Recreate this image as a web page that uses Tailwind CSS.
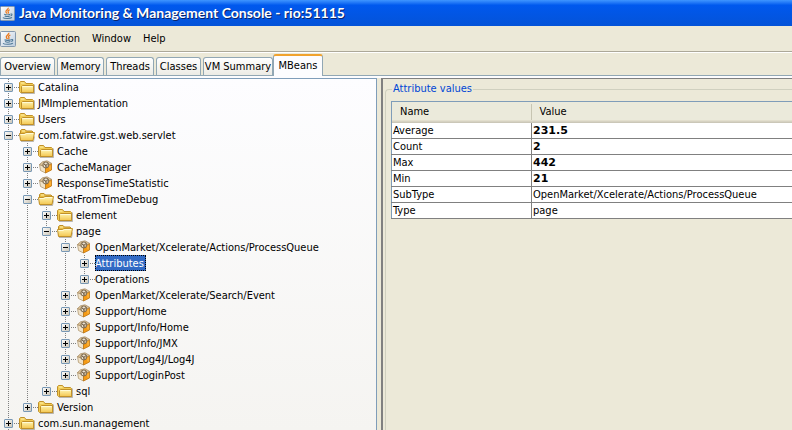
<!DOCTYPE html>
<html lang="en">
<head>
<meta charset="utf-8">
<meta name="viewport" content="width=device-width, initial-scale=1">
<title>Java Monitoring &amp; Management Console</title>
<script src="https://cdn.jsdelivr.net/npm/@tailwindcss/browser@4"></script>
</head>
<body class="flex h-screen flex-col overflow-hidden bg-[#ece9d8] font-['DejaVu_Sans_Condensed','DejaVu_Sans',sans-serif] text-[11px] leading-4 text-black">
<svg class="absolute size-0" aria-hidden="true">
  <defs>
    <linearGradient id="fold" x1="0" y1="0" x2="0" y2="1"><stop offset="0" stop-color="#fff6b4"/><stop offset="1" stop-color="#f3c650"/></linearGradient>
    <linearGradient id="box" x1="0" y1="0" x2="1" y2="1"><stop offset="0" stop-color="#fff"/><stop offset="1" stop-color="#c9c3b4"/></linearGradient>
    <linearGradient id="tile" x1="0" y1="0" x2="1" y2="1"><stop offset="0" stop-color="#fff"/><stop offset="1" stop-color="#b9cbdc"/></linearGradient>
  </defs>
  <symbol id="java" viewBox="0 0 16 16">
    <rect x=".5" y=".5" width="15" height="15" rx="1" fill="url(#tile)" stroke="#8499ad"/>
    <path d="M8.8 1.8c.7 1.8-3 2.600-2.500 4.400.2.800.9 1.200 1.100 1.900M10.400 4c-1.600.6-2.400 1.400-1.600 2.400.5.700.1 1.300-.5 1.700" fill="none" stroke="#ec7a1c" stroke-width="1.300"/>
    <path d="M4.500 8.800c1.500.7 5 .7 6.300 0M5 10.600c1.500.7 4 .7 5.400 0M3 12.300c1.500 1.300 8 1.300 9.800 0M11.200 8.600c2-.6 2.300 1.200 0 2" fill="none" stroke="#4d7896" stroke-width="1.100"/>
  </symbol>
  <symbol id="plus" viewBox="0 0 19 16">
    <path d="M14 8.500h1M16 8.500h1M18 8.500h1" stroke="#808080"/>
    <rect x="4.500" y="4.500" width="8" height="8" rx=".5" fill="url(#box)" stroke="#7898b5"/>
    <path d="M6 8.500h5M8.500 6v5" stroke="#000"/>
  </symbol>
  <symbol id="minus" viewBox="0 0 19 16">
    <path d="M14 8.500h1M16 8.500h1M18 8.500h1" stroke="#808080"/>
    <rect x="4.500" y="4.500" width="8" height="8" rx=".5" fill="url(#box)" stroke="#7898b5"/>
    <path d="M6 8.500h5" stroke="#000"/>
  </symbol>
  <symbol id="folder" viewBox="0 0 16 16">
    <path d="M2 14.500h13.500V5.500" fill="none" stroke="#8f8b80" opacity=".6"/>
    <path d="M.5 12.500v-9l1-1h4l1.500 2h6.500l1 1v8H1.500z" fill="#f2cc55" stroke="#c1912a"/>
    <path d="M2 4h3.500" stroke="#fff3b0"/>
    <path d="M2.500 13.500v-6l1-1h11v7z" fill="url(#fold)" stroke="#c1912a"/>
    <path d="M3.500 7.500h10" stroke="#fffbd8"/>
  </symbol>
  <symbol id="open" viewBox="0 0 16 16">
    <path d="M2 14.500h12.500l1-5" fill="none" stroke="#8f8b80" opacity=".6"/>
    <path d="M1.500 12.500v-9l1-1h3.500l1.500 1.500h5.500l1 1v7z" fill="#e9bd45" stroke="#bd8c25"/>
    <path d="M3 4h3" stroke="#fff3b0"/>
    <path d="M.5 6.500h5l1.500-1h8.500l-1.500 8H1.500z" fill="url(#fold)" stroke="#c1912a"/>
    <path d="M1.500 7.500h4.500l1.500-1h6.500" fill="none" stroke="#fffbd8"/>
  </symbol>
  <symbol id="bean" viewBox="0 0 16 16">
    <path d="M1.500 5.500 7.500 8v6L2.500 11.500z" fill="#f0e2c8" stroke="#b09871" stroke-width=".8"/>
    <path d="M7.500 8 13.500 4.500v6.500L7.500 14z" fill="#f59a13" stroke="#bd7614" stroke-width=".8"/>
    <path d="M1.500 5.500 4.500 2.800 9 1.800 13.500 4.300 7.500 8z" fill="#dfc59a" stroke="#a08560" stroke-width=".7"/>
    <circle cx="7.800" cy="6" r="3" fill="#cdbb9d" stroke="#77654c" stroke-width=".9"/>
    <path d="M6 5l2 1.500L9.800 4.500M8 6.500v2.200" fill="none" stroke="#5d4e3b" stroke-width=".9"/>
    <path d="M7.300 4.300h1.300M6 7h1" stroke="#fff"/>
    <path d="M12 6.500v4" stroke="#ffc158"/>
  </symbol>
</svg>

<header class="flex h-[26px] shrink-0 items-center gap-1 bg-linear-to-b from-[#3f95ff] via-[#0058ee] via-20% to-[#0453d8]">
  <svg class="size-[15px]" aria-hidden="true"><use href="#java"/></svg>
  <h1 class="whitespace-nowrap font-[Lato,sans-serif] text-[14px] font-bold text-white [text-shadow:1px_1px_0_#0a246a]">Java Monitoring &amp; Management Console - rio:51115</h1>
</header>

<nav class="flex h-[27px] shrink-0 items-center border-b border-white pb-px shadow-[inset_0_-1px_0_#aca899]" aria-label="Menu">
  <svg class="mr-2 size-4" aria-hidden="true"><use href="#java"/></svg>
  <div class="flex gap-3">
    <button>Connection</button>
    <button>Window</button>
    <button>Help</button>
  </div>
</nav>

<div role="tablist" class="flex h-[23px] shrink-0 items-end border-b border-[#91a7b4] pt-px [&>button]:whitespace-nowrap">
  <button role="tab" class="mr-0.5 h-[18px] w-[55px] rounded-t-[3px] border border-b-0 border-[#91a7b4] bg-linear-to-b from-white to-[#ecebe5]">Overview</button>
  <button role="tab" class="mr-0.5 h-[18px] w-[47px] rounded-t-[3px] border border-b-0 border-[#91a7b4] bg-linear-to-b from-white to-[#ecebe5]">Memory</button>
  <button role="tab" class="mr-0.5 h-[18px] w-[48px] rounded-t-[3px] border border-b-0 border-[#91a7b4] bg-linear-to-b from-white to-[#ecebe5]">Threads</button>
  <button role="tab" class="mr-0.5 h-[18px] w-[45px] rounded-t-[3px] border border-b-0 border-[#91a7b4] bg-linear-to-b from-white to-[#ecebe5]">Classes</button>
  <button role="tab" class="h-[18px] w-[70px] rounded-t-[3px] border border-b-0 border-[#91a7b4] bg-linear-to-b from-white to-[#ecebe5]">VM Summary</button>
  <button role="tab" aria-selected="true" class="-mb-0.5 h-[23px] w-[50px] rounded-t-[3px] border-x border-t-2 border-x-[#91a7b4] border-t-[#f0a22e] bg-[#fcfcfe] pb-0.5">MBeans</button>
</div>

<main class="flex min-h-0 flex-1 overflow-hidden border-t-2 border-[#fcfcfe]">
  <section aria-label="MBean tree" class="w-[377px] shrink-0 overflow-hidden border-t border-r border-[#7f9db9] bg-linear-to-b from-[#fdfdff] to-[#f5f4f1]">
    <ul class="whitespace-nowrap [&_button]:flex [&_li]:relative [&_li]:before:absolute [&_li]:before:top-0 [&_li]:before:left-2 [&_li]:before:h-full [&_li]:before:w-px [&_li]:before:bg-[repeating-linear-gradient(to_bottom,#808080_0_1px,transparent_1px_2px)] [&_li>div]:relative [&_li>div]:flex [&_li>div]:h-4 [&_span]:leading-[18px] [&_span]:h-4 [&_svg]:h-4 [&_svg]:w-[19px] [&_ul]:pl-[19px] [&_ul>li:last-child]:before:h-2">
      <li><div><button aria-label="Expand"><svg><use href="#plus"/></svg></button><svg viewBox="0 0 19 16"><use href="#folder" width="16" height="16"/></svg><span>Catalina</span></div></li>
      <li><div><button aria-label="Expand"><svg><use href="#plus"/></svg></button><svg viewBox="0 0 19 16"><use href="#folder" width="16" height="16"/></svg><span>JMImplementation</span></div></li>
      <li><div><button aria-label="Expand"><svg><use href="#plus"/></svg></button><svg viewBox="0 0 19 16"><use href="#folder" width="16" height="16"/></svg><span>Users</span></div></li>
      <li><div><button aria-label="Collapse"><svg><use href="#minus"/></svg></button><svg viewBox="0 0 19 16"><use href="#open" width="16" height="16"/></svg><span>com.fatwire.gst.web.servlet</span></div>
        <ul>
          <li><div><button aria-label="Expand"><svg><use href="#plus"/></svg></button><svg viewBox="0 0 19 16"><use href="#folder" width="16" height="16"/></svg><span>Cache</span></div></li>
          <li><div><button aria-label="Expand"><svg><use href="#plus"/></svg></button><svg viewBox="0 0 19 16"><use href="#bean" width="16" height="16"/></svg><span>CacheManager</span></div></li>
          <li><div><button aria-label="Expand"><svg><use href="#plus"/></svg></button><svg viewBox="0 0 19 16"><use href="#bean" width="16" height="16"/></svg><span>ResponseTimeStatistic</span></div></li>
          <li><div><button aria-label="Collapse"><svg><use href="#minus"/></svg></button><svg viewBox="0 0 19 16"><use href="#open" width="16" height="16"/></svg><span>StatFromTimeDebug</span></div>
            <ul>
              <li><div><button aria-label="Expand"><svg><use href="#plus"/></svg></button><svg viewBox="0 0 19 16"><use href="#folder" width="16" height="16"/></svg><span>element</span></div></li>
              <li><div><button aria-label="Collapse"><svg><use href="#minus"/></svg></button><svg viewBox="0 0 19 16"><use href="#open" width="16" height="16"/></svg><span>page</span></div>
                <ul>
                  <li><div><button aria-label="Collapse"><svg><use href="#minus"/></svg></button><svg viewBox="0 0 19 16"><use href="#bean" width="16" height="16"/></svg><span>OpenMarket/Xcelerate/Actions/ProcessQueue</span></div>
                    <ul>
                      <li><div><button aria-label="Expand"><svg><use href="#plus"/></svg></button><span class="bg-[#316ac5] pr-0.5 text-white outline-1 -outline-offset-1 outline-dotted outline-black">Attributes</span></div></li>
                      <li><div><button aria-label="Expand"><svg><use href="#plus"/></svg></button><span>Operations</span></div></li>
                    </ul>
                  </li>
                  <li><div><button aria-label="Expand"><svg><use href="#plus"/></svg></button><svg viewBox="0 0 19 16"><use href="#bean" width="16" height="16"/></svg><span>OpenMarket/Xcelerate/Search/Event</span></div></li>
                  <li><div><button aria-label="Expand"><svg><use href="#plus"/></svg></button><svg viewBox="0 0 19 16"><use href="#bean" width="16" height="16"/></svg><span>Support/Home</span></div></li>
                  <li><div><button aria-label="Expand"><svg><use href="#plus"/></svg></button><svg viewBox="0 0 19 16"><use href="#bean" width="16" height="16"/></svg><span>Support/Info/Home</span></div></li>
                  <li><div><button aria-label="Expand"><svg><use href="#plus"/></svg></button><svg viewBox="0 0 19 16"><use href="#bean" width="16" height="16"/></svg><span>Support/Info/JMX</span></div></li>
                  <li><div><button aria-label="Expand"><svg><use href="#plus"/></svg></button><svg viewBox="0 0 19 16"><use href="#bean" width="16" height="16"/></svg><span>Support/Log4J/Log4J</span></div></li>
                  <li><div><button aria-label="Expand"><svg><use href="#plus"/></svg></button><svg viewBox="0 0 19 16"><use href="#bean" width="16" height="16"/></svg><span>Support/LoginPost</span></div></li>
                </ul>
              </li>
              <li><div><button aria-label="Expand"><svg><use href="#plus"/></svg></button><svg viewBox="0 0 19 16"><use href="#folder" width="16" height="16"/></svg><span>sql</span></div></li>
            </ul>
          </li>
          <li><div><button aria-label="Expand"><svg><use href="#plus"/></svg></button><svg viewBox="0 0 19 16"><use href="#folder" width="16" height="16"/></svg><span>Version</span></div></li>
        </ul>
      </li>
      <li><div><button aria-label="Expand"><svg><use href="#plus"/></svg></button><svg viewBox="0 0 19 16"><use href="#folder" width="16" height="16"/></svg><span>com.sun.management</span></div></li>
    </ul>
  </section>

  <section class="ml-1 min-w-0 flex-1 border-t border-l-2 border-[#808080] pt-0.5 pl-0.5">
    <fieldset class="h-full rounded-tl-[4px] border-t border-l border-[#d0d0bf] pl-[5px]">
      <legend class="ml-px px-px text-[#0046d5]">Attribute values</legend>
      <table class="mt-1 w-full table-fixed border-collapse border-t border-l border-[#7f9db9] bg-white text-left">
        <colgroup><col class="w-[140px]"><col></colgroup>
        <thead>
          <tr class="h-[21px] bg-[#ebeadb] shadow-[inset_0_-1px_0_#cbc7b8,inset_0_-2px_0_#d6d2c2,inset_0_-3px_0_#e2decd]">
            <th class="p-0 pl-2 font-normal"><div class="border-r border-[#c7c5b2]">Name</div></th>
            <th class="p-0 pl-2 font-normal"><div>Value</div></th>
          </tr>
        </thead>
        <tbody class="[&_td]:border-b [&_td]:border-[#808080] [&_td]:p-0 [&_td]:pl-px [&_td]:leading-[15px] [&_td:first-child]:border-r">
          <tr><td>Average</td><td class="font-['DejaVu_Sans',sans-serif] font-bold">231.5</td></tr>
          <tr><td>Count</td><td class="font-['DejaVu_Sans',sans-serif] font-bold">2</td></tr>
          <tr><td>Max</td><td class="font-['DejaVu_Sans',sans-serif] font-bold">442</td></tr>
          <tr><td>Min</td><td class="font-['DejaVu_Sans',sans-serif] font-bold">21</td></tr>
          <tr><td>SubType</td><td>OpenMarket/Xcelerate/Actions/ProcessQueue</td></tr>
          <tr><td>Type</td><td>page</td></tr>
        </tbody>
      </table>
    </fieldset>
  </section>
</main>
</body>
</html>
